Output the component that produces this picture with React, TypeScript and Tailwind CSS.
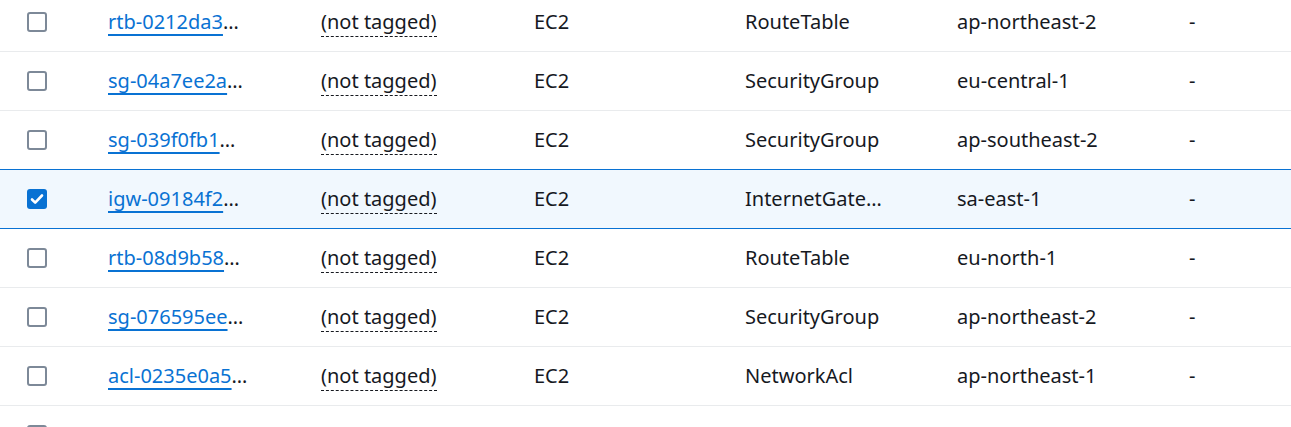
import React from 'react';

type Row = {
  id: string;
  service: string;
  type: string;
  region: string;
  selected?: boolean;
};

const rows: Row[] = [
  { id: 'rtb-0212da3', service: 'EC2', type: 'RouteTable', region: 'ap-northeast-2' },
  { id: 'sg-04a7ee2a', service: 'EC2', type: 'SecurityGroup', region: 'eu-central-1' },
  { id: 'sg-039f0fb1', service: 'EC2', type: 'SecurityGroup', region: 'ap-southeast-2' },
  { id: 'igw-09184f2', service: 'EC2', type: 'InternetGate…', region: 'sa-east-1', selected: true },
  { id: 'rtb-08d9b58', service: 'EC2', type: 'RouteTable', region: 'eu-north-1' },
  { id: 'sg-076595ee', service: 'EC2', type: 'SecurityGroup', region: 'ap-northeast-2' },
  { id: 'acl-0235e0a5', service: 'EC2', type: 'NetworkAcl', region: 'ap-northeast-1' },
  { id: 'rtb-08863b59', service: 'EC2', type: 'RouteTable', region: 'us-west-1' },
];

const Checkbox: React.FC<{ checked?: boolean }> = ({ checked }) =>
  checked ? (
    <span className="flex h-[20px] w-[20px] items-center justify-center rounded-[3px] bg-[#0972d3]">
      <svg viewBox="0 0 20 20" className="h-[20px] w-[20px]" fill="none">
        <path d="M5 10.5l3.2 3.2L15 6.5" stroke="#fff" strokeWidth="2.6" strokeLinecap="round" strokeLinejoin="round" />
      </svg>
    </span>
  ) : (
    <span className="block h-[20px] w-[20px] rounded-[3px] border-2 border-[#7d8998] bg-white" />
  );

const App: React.FC = () => {
  return (
    <div className="h-[427px] overflow-hidden bg-white font-['Noto_Sans',sans-serif] text-[20px] text-[#16191f]">
      <div className="-mt-[7px]">
        {rows.map((row) => (
          <div
            key={row.id}
            className={
              row.selected
                ? 'relative z-10 -mt-px flex h-[60px] items-center border-y border-[#0972d3] bg-[#f1f8fe]'
                : 'flex h-[59px] items-center border-b border-[#e9ebed]'
            }
          >
            <div className="w-[108px] shrink-0 pl-[27px]">
              <Checkbox checked={row.selected} />
            </div>
            <div className="w-[213px] shrink-0 whitespace-nowrap">
              <a href="#" className="text-[#0972d3] underline decoration-[2px] underline-offset-[5px]">
                {row.id}
              </a>
              <span>…</span>
            </div>
            <div className="w-[213px] shrink-0">
              <span className="border-b border-dashed border-[#16191f] pb-[1px]">(not tagged)</span>
            </div>
            <div className="w-[211px] shrink-0">{row.service}</div>
            <div className="w-[212px] shrink-0 whitespace-nowrap">{row.type}</div>
            <div className="w-[232px] shrink-0">{row.region}</div>
            <div className="flex-1">-</div>
          </div>
        ))}
      </div>
    </div>
  );
};

export default App;
